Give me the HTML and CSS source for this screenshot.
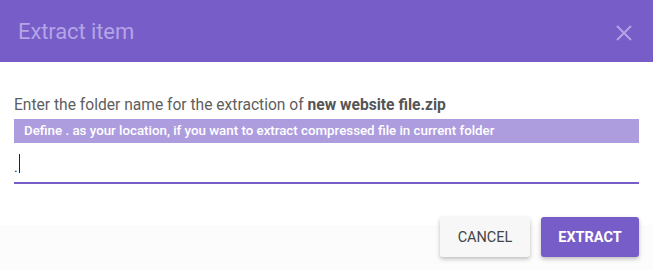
FILE: index.html
```html
<!DOCTYPE html>
<html>
    <head>
        <title>Extract item</title>
        <link rel="stylesheet" href="styles.css">
    </head>
    <body>
        <div class="dialog">
            <div class="dialog_head">
                <h1>Extract item</h1>
                <span class="close_btn">
                    <svg width="16" height="16" viewBox="0 0 16 16">
                        <path d="M1 1 L15 15 M15 1 L1 15" stroke="#b3a4e6" stroke-width="2" fill="none"/>
                    </svg>
                </span>
            </div>
            <div class="dialog_body">
                <p class="prompt">Enter the folder name for the extraction of <b>new website file.zip</b></p>
                <div class="hint">Define . as your location, if you want to extract compressed file in current folder</div>
                <div class="field">
                    <span class="field_value">.</span><span class="caret"></span>
                </div>
            </div>
            <div class="dialog_foot">
                <button class="btn btn_cancel">CANCEL</button>
                <button class="btn btn_extract">EXTRACT</button>
            </div>
        </div>
    </body>
</html>
```

FILE: styles.css
```css
body {
    margin: 0;
    background: #ffffff;
    font-family: Roboto, "Liberation Sans", sans-serif;
}
.dialog {
    width: 653px;
    height: 270px;
}
.dialog_head {
    height: 62px;
    background: #775dc8;
    display: flex;
    align-items: center;
    justify-content: space-between;
    padding: 0 21px 0 18px;
    box-sizing: border-box;
}
.dialog_head h1 {
    margin: 0;
    font-size: 22px;
    font-weight: 400;
    color: #b3a4e6;
    letter-spacing: -0.1px;
}
.close_btn {
    display: flex;
    padding-top: 4px;
}
.dialog_body {
    background: #ffffff;
    padding: 34px 14px 0 14px;
    height: 140px;
    box-sizing: border-box;
}
.prompt {
    margin: 0 0 5px 0;
    font-size: 15.6px;
    color: #5e5e5e;
    line-height: 18px;
}
.prompt b {
    font-weight: 700;
    color: #555555;
}
.hint {
    background: #ad9ddf;
    color: #ffffff;
    font-size: 13.3px;
    font-weight: 500;
    line-height: 24px;
    padding: 0 10px;
}
.field {
    height: 37px;
    border-bottom: 2px solid #775dc8;
    display: flex;
    align-items: center;
    padding-top: 2px;
    box-sizing: content-box;
}
.field_value {
    font-size: 14px;
    color: #333333;
    padding-top: 6px;
}
.caret {
    width: 1px;
    height: 19px;
    background: #222222;
    margin-left: 1px;
}
.dialog_foot {
    display: flex;
    justify-content: flex-end;
    gap: 11px;
    padding: 15px 14px 0 0;
    height: 68px;
    box-sizing: border-box;
    background: linear-gradient(#ffffff 23px, #fcfcfc 23px);
}
.btn {
    height: 40px;
    border: none;
    border-radius: 3px;
    font-family: Roboto, "Liberation Sans", sans-serif;
    font-size: 14.5px;
    box-shadow: 0 2px 4px rgba(0, 0, 0, 0.25);
}
.btn_cancel {
    width: 90px;
    background: #f7f7f7;
    color: #444444;
    font-weight: 400;
}
.btn_extract {
    width: 98px;
    background: #775dc8;
    color: #ffffff;
    font-weight: 700;
}
```
